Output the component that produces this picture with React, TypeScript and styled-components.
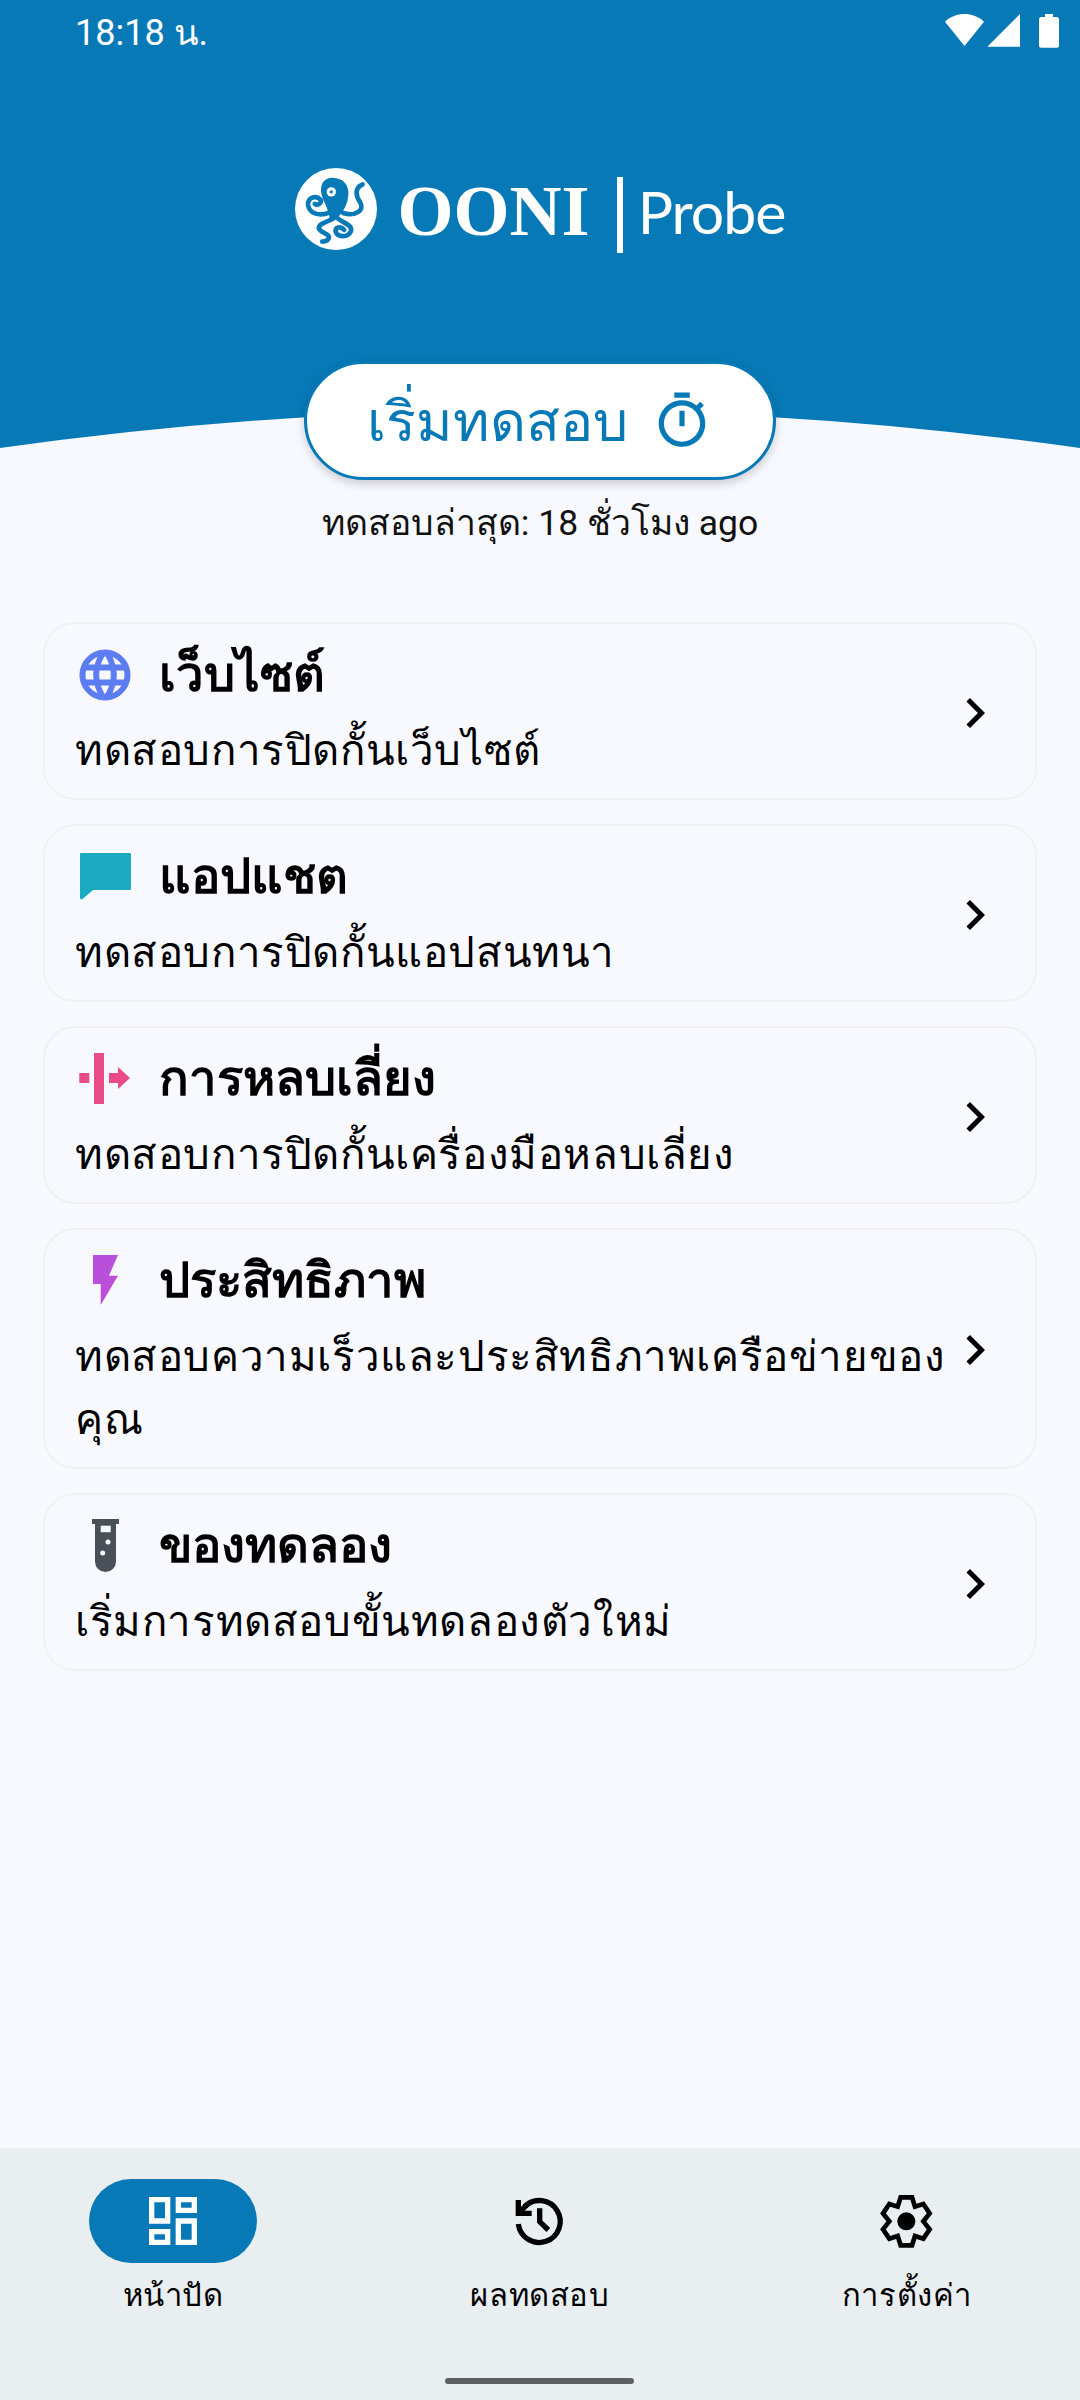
import styled, { createGlobalStyle } from "styled-components"
import { MdChevronRight, MdOutlineDashboard, MdOutlineTimer } from "react-icons/md"
import type { ReactNode } from "react"

const BLUE = "#0779b6"
const PAGE = "#f8f9ff"
const THAI = `Roboto, sans-serif`

const GlobalStyle = createGlobalStyle`
    html, body {
        margin: 0;
        padding: 0;
        background: ${PAGE};
    }
    * {
        box-sizing: border-box;
    }
`

const Screen = styled.div`
    width: 1080px;
    height: 2400px;
    display: flex;
    flex-direction: column;
    background: ${PAGE};
    font-family: ${THAI};
    color: #000;
    overflow: hidden;
`

const Hero = styled.header`
    position: relative;
    height: 448px;
    flex: none;
    display: flex;
    flex-direction: column;
    align-items: center;
    background: ${BLUE};
    & > * {
        flex: none;
    }
`

const Wave = styled.svg`
    position: absolute;
    left: 0;
    bottom: 0;
`

const StatusBar = styled.div`
    align-self: stretch;
    height: 64px;
    padding: 0 20px 0 75px;
    display: flex;
    align-items: center;
    justify-content: space-between;
    color: #fff;
    font-size: 36px;
`

const StatusIcons = styled.svg`
    display: block;
    margin-top: -2px;
`

const Logo = styled.div`
    margin-top: 105px;
    height: 80px;
    display: flex;
    align-items: center;
    color: #fff;
`

const OoniWord = styled.span`
    margin: 4px 0 0 21px;
    font-family: "Liberation Serif", serif;
    font-weight: 700;
    font-size: 72px;
    line-height: 80px;
`

const LogoDivider = styled.span`
    width: 6px;
    height: 76px;
    margin: 12px 15px 0 27px;
    background: #fff;
`

const ProbeWord = styled.span`
    font-family: Lato, sans-serif;
    font-weight: 400;
    font-size: 59px;
    letter-spacing: -1px;
    line-height: 80px;
    margin-top: 6px;
`

const StartButton = styled.button`
    position: relative;
    z-index: 1;
    width: 472px;
    height: 119px;
    margin-top: 112px;
    display: flex;
    align-items: center;
    justify-content: center;
    gap: 23px;
    padding: 0;
    border: 3px solid ${BLUE};
    border-radius: 60px;
    background: #fff;
    color: ${BLUE};
    font-family: ${THAI};
    font-size: 55.5px;
    box-shadow: 0 4px 10px rgba(0, 0, 0, 0.18);
`

const LastTest = styled.p`
    margin: 52px 0 0;
    text-align: center;
    font-size: 35.5px;
    line-height: 46px;
    color: #111;
`

const CardList = styled.main`
    flex: 1;
    padding: 0 43px;
    margin-top: 76px;
    display: flex;
    flex-direction: column;
    gap: 24px;
`

const Card = styled.section`
    display: flex;
    align-items: center;
    padding: 21px 30px 16px 30px;
    border: 2px solid #f0f1f2;
    border-radius: 32px;
`

const CardBody = styled.div`
    flex: 1;
    min-width: 0;
`

const TitleRow = styled.div`
    height: 60px;
    display: flex;
    align-items: center;
    gap: 24px;
    margin-bottom: 14px;
`

const IconSlot = styled.span`
    width: 60px;
    height: 60px;
    flex: none;
    display: block;
    color: ${(p) => p.color};
    & > svg {
        display: block;
    }
`

const CardTitle = styled.h2`
    margin: 0;
    font-size: 49px;
    font-weight: 700;
    line-height: 60px;
`

const CardText = styled.p`
    margin: 0;
    font-size: 42px;
    letter-spacing: 0.6px;
    line-height: 63px;
    white-space: pre;
`

const Chevron = styled(MdChevronRight)`
    flex: none;
    margin-top: -2px;
`

const BottomNav = styled.nav`
    position: relative;
    height: 252px;
    flex: none;
    padding: 31px 89px 0;
    display: flex;
    justify-content: space-between;
    background: #e9eef0;
`

const NavItem = styled.div`
    width: 168px;
    display: flex;
    flex-direction: column;
    align-items: center;
`

const NavPill = styled.div<{ $active?: boolean }>`
    width: 168px;
    height: 84px;
    display: flex;
    align-items: center;
    justify-content: center;
    border-radius: 42px;
    background: ${(p) => (p.$active ? BLUE : "transparent")};
    color: ${(p) => (p.$active ? "#fff" : "#000")};
`

const NavLabel = styled.span`
    margin-top: 13px;
    font-size: 31px;
    letter-spacing: 0.6px;
    line-height: 40px;
    white-space: nowrap;
`

const HomeBar = styled.div`
    position: absolute;
    left: 445px;
    bottom: 16px;
    width: 189px;
    height: 6px;
    border-radius: 3px;
    background: #5c6060;
`

const OctopusLogo = () => (
    <svg width="82" height="82" viewBox="49 56 244 244">
        <circle cx="171" cy="178" r="122" fill="#fff" />
        <path d="M160 85C195 85 210 110 208 135C205 165 195 185 172 207L152 207C150 180 135 160 128 135C122 105 135 85 160 85Z" fill={BLUE} />
        <circle cx="157" cy="127" r="14" fill="#fff" />
        <circle cx="157" cy="127" r="5" fill={BLUE} />
        <g fill="none" stroke={BLUE} strokeWidth="14" strokeLinecap="round">
            <path d="M250 105C225 115 230 140 243 158C258 185 225 200 192 190" />
            <path d="M152 188C120 202 90 190 88 165C87 145 110 135 125 150C130 160 115 170 108 163" />
            <path d="M165 205C150 215 120 220 120 235C125 250 150 250 150 262C148 275 138 275 130 275" />
            <path d="M175 205C195 222 222 225 215 245C205 265 175 262 170 245C168 232 185 228 195 240" />
        </g>
        <path d="M216 140C224 160 240 172 222 186C208 192 196 176 204 162C208 156 213 150 216 140Z" fill="#fff" />
    </svg>
)

const GlobeIcon = () => (
    <svg width="60" height="60" viewBox="0 0 24 24" fill="currentColor" stroke="currentColor" strokeWidth="0.4">
        <path d="M11.99 2C6.47 2 2 6.48 2 12s4.47 10 9.99 10C17.52 22 22 17.52 22 12S17.52 2 11.99 2zm6.93 6h-2.95c-.32-1.25-.78-2.45-1.38-3.56 1.84.63 3.37 1.91 4.33 3.56zM12 4.04c.83 1.2 1.48 2.53 1.91 3.96h-3.82c.43-1.43 1.08-2.76 1.91-3.96zM4.26 14C4.1 13.36 4 12.69 4 12s.1-1.36.26-2h3.38c-.08.66-.14 1.32-.14 2s.06 1.34.14 2H4.26zm.82 2h2.95c.32 1.25.78 2.45 1.38 3.56-1.84-.63-3.37-1.9-4.33-3.56zm2.95-8H5.08c.96-1.66 2.49-2.93 4.33-3.56C8.81 5.55 8.35 6.75 8.03 8zM12 19.96c-.83-1.2-1.48-2.53-1.91-3.96h3.82c-.43 1.43-1.08 2.76-1.91 3.96zM14.34 14H9.66c-.09-.66-.16-1.32-.16-2s.07-1.35.16-2h4.68c.09.65.16 1.32.16 2s-.07 1.34-.16 2zm.25 5.56c.6-1.11 1.06-2.31 1.38-3.56h2.95c-.96 1.65-2.49 2.93-4.33 3.56zM16.36 14c.08-.66.14-1.32.14-2s-.06-1.34-.14-2h3.38c.16.64.26 1.31.26 2s-.1 1.36-.26 2h-3.38z" />
    </svg>
)

const ChatIcon = () => (
    <svg width="60" height="60" viewBox="0 0 60 60" fill="currentColor">
        <path d="M6 6H55Q56 6 56 7V42Q56 43 55 43H18L7.500 52Q5 53.500 5 50.500V7Q5 6 6 6Z" />
    </svg>
)

const TorIcon = () => (
    <svg width="60" height="60" viewBox="0 0 60 60" fill="currentColor">
        <rect x="4.3" y="24" width="10" height="10" />
        <rect x="19" y="4" width="10" height="51" />
        <rect x="34" y="24" width="10" height="10" />
        <polygon points="43,18 55,29 43,40" />
    </svg>
)

const BoltIcon = () => (
    <svg width="60" height="60" viewBox="0 0 60 60" fill="currentColor">
        <polygon points="18,4 43,4 34,24.7 43,24.7 25.7,54 25.7,33 18,33" />
    </svg>
)

const FlaskIcon = () => (
    <svg width="60" height="60" viewBox="0 0 60 60">
        <path d="M17 3H44V8H41V45.5A10.5 10.5 0 0 1 20 45.5V8H17Z" fill="currentColor" />
        <rect x="25.7" y="9.7" width="10" height="6.5" fill={PAGE} />
        <circle cx="33" cy="26" r="2.5" fill={PAGE} />
        <circle cx="27.7" cy="37" r="2.5" fill={PAGE} />
    </svg>
)

const HistoryIcon = () => (
    <svg width="100" height="80" viewBox="0 3 300 240" fill="none" stroke="currentColor" strokeWidth="16">
        <path d="M85 132A63 63 0 1 0 104 79" />
        <path d="M85 60V100H125" />
        <path d="M85 100L112 73" />
        <path d="M149 85V125L175 150" />
    </svg>
)

const GearIcon = () => (
    <svg width="100" height="80" viewBox="-9 3 300 240" fill="none" stroke="currentColor" strokeWidth="14">
        <path d="M122 52H156L165 80L190 72L209 100L190 124L209 148L190 176L165 168L156 196H122L113 168L88 176L69 148L88 124L69 100L88 72L113 80Z" />
        <circle cx="139" cy="124" r="27" fill="currentColor" stroke="none" />
    </svg>
)

interface TestCard {
    title: string
    text: string
    color: string
    icon: ReactNode
}

const test_cards: TestCard[] = [
    { title: "เว็บไซต์", text: "ทดสอบการปิดกั้นเว็บไซต์", color: "#5c7cf2", icon: <GlobeIcon /> },
    { title: "แอปแชต", text: "ทดสอบการปิดกั้นแอปสนทนา", color: "#1aabc0", icon: <ChatIcon /> },
    { title: "การหลบเลี่ยง", text: "ทดสอบการปิดกั้นเครื่องมือหลบเลี่ยง", color: "#e84b85", icon: <TorIcon /> },
    // line break by hand, the browser wraps this one a word earlier than the phone
    { title: "ประสิทธิภาพ", text: "ทดสอบความเร็วและประสิทธิภาพเครือข่ายของ\nคุณ", color: "#b94fdb", icon: <BoltIcon /> },
    { title: "ของทดลอง", text: "เริ่มการทดสอบขั้นทดลองตัวใหม่", color: "#4a5058", icon: <FlaskIcon /> },
]

const App = () => (
    <Screen>
        <GlobalStyle />
        <Hero>
            <Wave width="1080" height="38" viewBox="0 0 1080 38">
                <path d="M0 38Q540 -38 1080 38Z" fill={PAGE} />
            </Wave>
            <StatusBar>
                <span>18:18 น.</span>
                <StatusIcons width="115" height="34" viewBox="0 0 115 34" fill="#fff">
                    <path d="M0 7.700C11 -2.500 28 -2.500 39 7.700L19.500 32Z" />
                    <path d="M75 0V32.700H42.300Z" />
                    <path d="M94 5C94 4 95 3 96 3H100V0H108V3H112C113 3 114 4 114 5V31.700C114 32.700 113 33.700 112 33.700H96C95 33.700 94 32.700 94 31.700Z" />
                </StatusIcons>
            </StatusBar>
            <Logo>
                <OctopusLogo />
                <OoniWord>OONI</OoniWord>
                <LogoDivider />
                <ProbeWord>Probe</ProbeWord>
            </Logo>
            <StartButton>
                เริ่มทดสอบ
                <MdOutlineTimer size={62} />
            </StartButton>
        </Hero>
        <LastTest>ทดสอบล่าสุด: 18 ชั่วโมง ago</LastTest>
        <CardList>
            {test_cards.map((card) => (
                <Card key={card.title}>
                    <CardBody>
                        <TitleRow>
                            <IconSlot color={card.color}>{card.icon}</IconSlot>
                            <CardTitle>{card.title}</CardTitle>
                        </TitleRow>
                        <CardText>{card.text}</CardText>
                    </CardBody>
                    <Chevron size={60} />
                </Card>
            ))}
        </CardList>
        <BottomNav>
            <NavItem>
                <NavPill $active><MdOutlineDashboard size={64} /></NavPill>
                <NavLabel>หน้าปัด</NavLabel>
            </NavItem>
            <NavItem>
                <NavPill><HistoryIcon /></NavPill>
                <NavLabel>ผลทดสอบ</NavLabel>
            </NavItem>
            <NavItem>
                <NavPill><GearIcon /></NavPill>
                <NavLabel>การตั้งค่า</NavLabel>
            </NavItem>
            <HomeBar />
        </BottomNav>
    </Screen>
)

export default App
